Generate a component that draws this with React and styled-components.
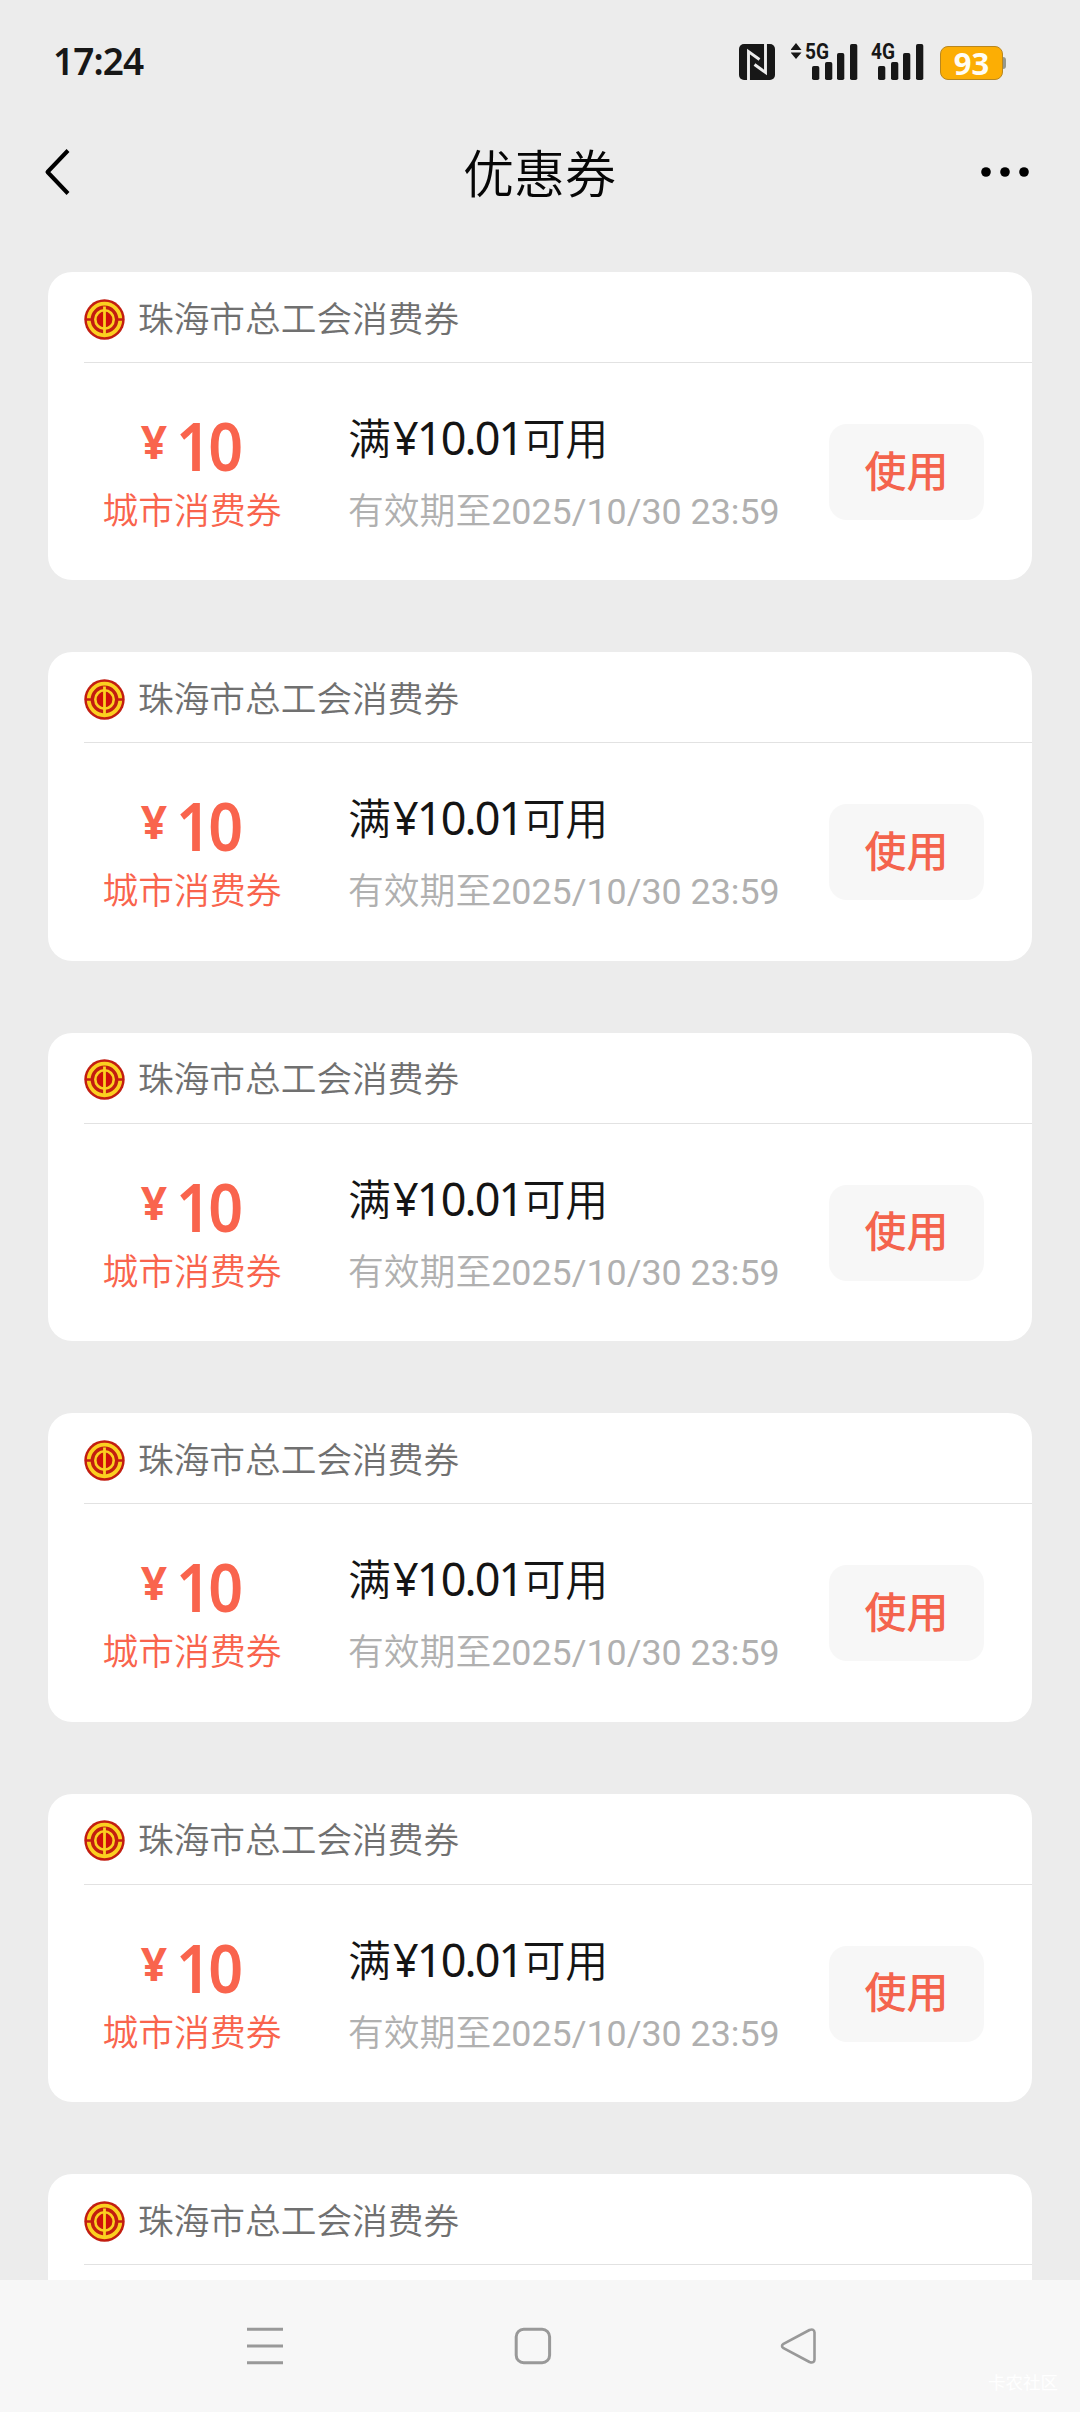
import React from "react";
import styled, { createGlobalStyle } from "styled-components";

const GlobalStyle = createGlobalStyle`
  * {
    box-sizing: border-box;
  }
  body {
    margin: 0;
    background: #ececec;
    font-family: "Noto Sans CJK SC", sans-serif;
  }
`;

const Screen = styled.div`
  display: flex;
  flex-direction: column;
  width: 1080px;
  height: 2412px;
  overflow: hidden;
  background: #ececec;
`;

const StatusBar = styled.div`
  display: flex;
  flex: none;
  align-items: flex-start;
  justify-content: space-between;
  height: 118px;
  padding: 42px 74px 0 53px;
`;

const Clock = styled.span`
  font-family: "Noto Sans", sans-serif;
  font-size: 37px;
  font-weight: 600;
  line-height: 38px;
  letter-spacing: -0.9px;
  color: #171717;
`;

const StatusIcons = styled.div`
  display: flex;
  align-items: flex-start;

  svg {
    display: block;
  }
`;

const NfcIcon = styled.svg`
  margin: 2px 16px 0 0;
`;

const SignalIcon = styled.svg`
  margin: -8px ${({ $gap }) => $gap}px 0 0;
`;

const Battery = styled.div`
  display: flex;
  align-items: center;
  margin-top: 4px;

  &::after {
    content: "";
    width: 3px;
    height: 12px;
    border-radius: 0 3px 3px 0;
    background: #95988c;
  }
`;

const BatteryLevel = styled.span`
  width: 63px;
  height: 34px;
  border: 1px solid #b98720;
  border-radius: 8px;
  background: #fcae04;
  color: #fffdf5;
  font-family: "Noto Sans", sans-serif;
  font-size: 31px;
  font-weight: 700;
  line-height: 33px;
  text-align: center;
`;

const TitleBar = styled.header`
  display: flex;
  flex: none;
  align-items: center;
  justify-content: space-between;
  height: 107px;
  padding: 0 51px 0 44px;

  svg {
    display: block;
  }
`;

const Title = styled.h1`
  margin: -2px 0 0;
  padding-left: 6px;
  font-size: 51px;
  font-weight: 350;
  line-height: 76px;
  color: #060606;
`;

const TitleSide = styled.div`
  display: flex;
  width: 52px;
  justify-content: ${({ $end }) => ($end ? "flex-end" : "flex-start")};
`;

const CouponList = styled.main`
  flex: 1;
  min-height: 0;
  padding: 47px 48px 0;
  overflow: hidden;
`;

const Card = styled.section`
  height: 308.4px;
  margin-bottom: 72.1px;
  border-radius: 24px;
  background: #fff;
`;

const CardHeader = styled.div`
  display: flex;
  align-items: center;
  gap: 13px;
  height: 91px;
  margin-left: 36px;
  border-bottom: 1px solid #e2e2e2;

  svg {
    flex: none;
    margin-top: 4px;
  }
`;

const Merchant = styled.span`
  margin-top: -1px;
  font-size: 35.7px;
  font-weight: 350;
  line-height: 52px;
  color: #707070;
`;

const CardBody = styled.div`
  display: flex;
  align-items: flex-start;
`;

const Value = styled.div`
  width: 288px;
  padding-top: 45px;
  text-align: center;
  color: #f9644d;
`;

const Price = styled.div`
  display: flex;
  align-items: flex-start;
  justify-content: center;
  height: 75px;
  padding-left: 3px;
  font-family: "Noto Sans", sans-serif;
  font-weight: 600;
`;

const Currency = styled.span`
  margin: 2px 8.5px 0 0;
  font-size: 46px;
  font-weight: 700;
  line-height: 62px;
`;

const Amount = styled.span`
  font-size: 67px;
  line-height: 75px;
  letter-spacing: -3px;
  transform: scaleX(0.91);
  transform-origin: left center;
`;

const Kind = styled.div`
  font-size: 35.8px;
  font-weight: 350;
  line-height: 50px;
`;

const Detail = styled.div`
  flex: 1;
  padding: 44px 0 0 12px;
`;

const Condition = styled.div`
  font-size: 43px;
  font-weight: 350;
  line-height: 58px;
  color: #141414;
`;

const Figure = styled.span`
  margin-left: 2px;
  font-family: "Noto Sans", sans-serif;
  font-size: 45px;
  font-weight: 400;
  letter-spacing: -1.9px;
`;

const Expiry = styled.div`
  margin-top: 16px;
  font-size: 35.8px;
  font-weight: 350;
  line-height: 50px;
  white-space: nowrap;
  color: #b0b0b0;
`;

const DateTime = styled.span`
  font-family: Roboto, sans-serif;
  font-weight: 400;
`;

const UseButton = styled.button`
  flex: none;
  width: 155px;
  height: 96px;
  margin: 61px 48px 0 0;
  padding: 0 0 7px;
  border: none;
  border-radius: 18px;
  background: #f7f7f7;
  color: #f4644d;
  font-family: inherit;
  font-size: 42px;
  font-weight: 500;
  line-height: 62px;
`;

const SystemNav = styled.nav`
  position: relative;
  display: flex;
  flex: none;
  align-items: flex-start;
  height: 132px;
  padding: 45px 0 0 245px;
  background: #f7f7f7;
`;

const NavIcon = styled.svg`
  display: block;
  margin-right: ${({ $gap }) => $gap || 0}px;
`;

const Watermark = styled.span`
  position: absolute;
  right: 22px;
  bottom: 18px;
  font-size: 17.5px;
  line-height: 24px;
  color: #fff;
`;

const BARS = [
  { x: 0, y: 22 },
  { x: 13, y: 18 },
  { x: 25, y: 9 },
  { x: 38, y: 0 },
];

const Signal = ({ label, arrows, gap }) => {
  const left = arrows ? 21 : 7;
  return (
    <SignalIcon $gap={gap} width={left + 46} height="48" viewBox={`0 -8 ${left + 46} 48`}>
      {arrows && <path d="M5 1L10.5 8H-0.5ZM5 17L10.5 10.5H-0.5Z" fill="#171717" />}
      <text
        x={left - 7}
        y="17"
        textLength="24"
        lengthAdjust="spacingAndGlyphs"
        fontFamily="Roboto, sans-serif"
        fontWeight="700"
        fontSize="22.5"
        fill="#171717"
      >
        {label}
      </text>
      {BARS.map((bar) => (
        <rect
          key={bar.x}
          x={left + bar.x}
          y={bar.y + 2}
          width="7.3"
          height={36 - bar.y}
          rx="1.8"
          fill="#171717"
        />
      ))}
    </SignalIcon>
  );
};

const UnionLogo = () => (
  <svg width="41" height="41" viewBox="0 0 41 41" fill="none">
    <circle cx="20.5" cy="20.5" r="20.2" fill="#c21d10" />
    <circle cx="20.5" cy="20.5" r="15.8" stroke="#fbd020" strokeWidth="3.8" />
    <path d="M1 20.5H9M32 20.5H40" stroke="#c21d10" strokeWidth="2.6" />
    <circle cx="20.5" cy="20.5" r="9.2" stroke="#fbd020" strokeWidth="2.6" />
    <circle cx="20.5" cy="20.5" r="6.8" fill="#d00f0a" />
    <path d="M20.5 7.5V36" stroke="#fbd020" strokeWidth="2.8" />
  </svg>
);

const CouponCard = ({ coupon, headerOnly }) => (
  <Card>
    <CardHeader>
      <UnionLogo />
      <Merchant>{coupon.merchant}</Merchant>
    </CardHeader>
    {!headerOnly && (
      <CardBody>
        <Value>
          <Price>
            <Currency>¥</Currency>
            <Amount>{coupon.amount}</Amount>
          </Price>
          <Kind>{coupon.kind}</Kind>
        </Value>
        <Detail>
          <Condition>
            满<Figure>¥{coupon.minimum}</Figure>可用
          </Condition>
          <Expiry>
            有效期至<DateTime>{coupon.expiry}</DateTime>
          </Expiry>
        </Detail>
        <UseButton>使用</UseButton>
      </CardBody>
    )}
  </Card>
);

const coupons = Array.from({ length: 6 }, (_, id) => ({
  id,
  merchant: "珠海市总工会消费券",
  amount: 10,
  kind: "城市消费券",
  minimum: "10.01",
  expiry: "2025/10/30 23:59",
}));

const App = () => {
  return (
    <Screen>
      <GlobalStyle />
      <StatusBar>
        <Clock>17:24</Clock>
        <StatusIcons>
          <NfcIcon width="36" height="36" viewBox="0 0 36 36" fill="none">
            <rect width="36" height="36" rx="5" fill="#171717" />
            <path
              d="M9.5 36V7.5L20.5 15.5M26.5 0V28.5L15.5 20.5"
              stroke="#ececec"
              strokeWidth="2.9"
            />
          </NfcIcon>
          <Signal label="5G" arrows gap={13} />
          <Signal label="4G" gap={16} />
          <Battery>
            <BatteryLevel>93</BatteryLevel>
          </Battery>
        </StatusIcons>
      </StatusBar>

      <TitleBar>
        <TitleSide>
          <svg width="26" height="48" viewBox="0 0 26 48" fill="none">
            <path
              d="M24 2.5L3.5 24L24 45.5"
              stroke="#000"
              strokeWidth="4"
              strokeLinejoin="round"
            />
          </svg>
        </TitleSide>
        <Title>优惠券</Title>
        <TitleSide $end>
          <svg width="48" height="10" viewBox="0 0 48 10">
            <circle cx="5" cy="5" r="4.8" />
            <circle cx="24" cy="5" r="4.8" />
            <circle cx="43" cy="5" r="4.8" />
          </svg>
        </TitleSide>
      </TitleBar>

      <CouponList>
        {/* the last card only peeks out above the system bar */}
        {coupons.map((coupon, i) => (
          <CouponCard
            key={coupon.id}
            coupon={coupon}
            headerOnly={i === coupons.length - 1}
          />
        ))}
      </CouponList>

      <SystemNav>
        <NavIcon $gap={228} width="40" height="42" viewBox="0 0 40 42">
          <path d="M2 4.3H38M2 21H38M2 37.7H38" stroke="#999" strokeWidth="3" />
        </NavIcon>
        <NavIcon $gap={226} width="40" height="42" viewBox="0 0 40 42">
          <rect x="3.2" y="4.3" width="33.4" height="33.4" rx="7.5" fill="none" stroke="#999" strokeWidth="3" />
        </NavIcon>
        <NavIcon width="40" height="42" viewBox="0 0 40 42">
          <path
            d="M4.5 18.8L30.5 5Q35.3 3.4 35.5 7.4V34.6Q35.3 38.6 30.5 37L4.5 23.2Q1.5 21 4.5 18.8Z"
            fill="none"
            stroke="#999"
            strokeWidth="2.6"
            strokeLinejoin="round"
          />
        </NavIcon>
        <Watermark>卡农社区</Watermark>
      </SystemNav>
    </Screen>
  );
};

export default App;
